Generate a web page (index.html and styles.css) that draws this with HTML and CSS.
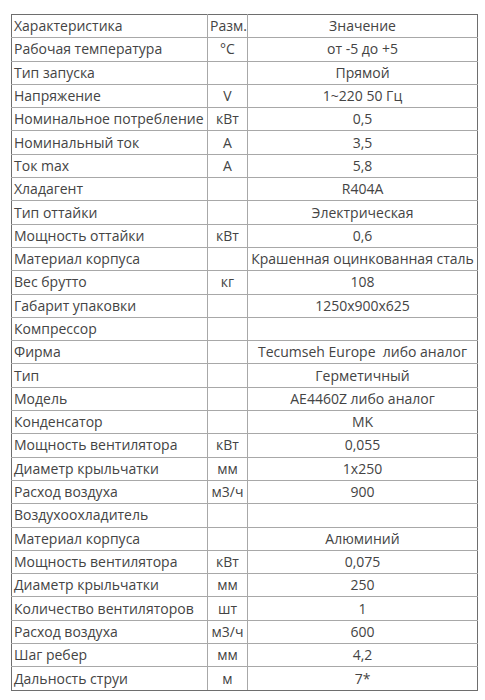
FILE: index.html
```html
<!DOCTYPE html>
<html lang="ru">
<head>
<meta charset="utf-8">
<link rel="stylesheet" href="styles.css">
</head>
<body>
<table class="spec">
<colgroup><col class="c1"><col class="c2"><col class="c3"></colgroup>
<tr><td>Характеристика</td><td class="u">Разм.</td><td class="v">Значение</td></tr>
<tr><td>Рабочая температура</td><td class="u">°C</td><td class="v">от -5 до +5</td></tr>
<tr><td>Тип запуска</td><td class="u"></td><td class="v">Прямой</td></tr>
<tr><td>Напряжение</td><td class="u">V</td><td class="v">1~220 50 Гц</td></tr>
<tr><td>Номинальное потребление</td><td class="u">кВт</td><td class="v">0,5</td></tr>
<tr><td>Номинальный ток</td><td class="u">А</td><td class="v">3,5</td></tr>
<tr><td>Ток max</td><td class="u">А</td><td class="v">5,8</td></tr>
<tr><td>Хладагент</td><td class="u"></td><td class="v">R404A</td></tr>
<tr><td>Тип оттайки</td><td class="u"></td><td class="v">Электрическая</td></tr>
<tr><td>Мощность оттайки</td><td class="u">кВт</td><td class="v">0,6</td></tr>
<tr><td>Материал корпуса</td><td class="u"></td><td class="v">Крашенная оцинкованная сталь</td></tr>
<tr><td>Вес брутто</td><td class="u">кг</td><td class="v">108</td></tr>
<tr><td>Габарит упаковки</td><td class="u"></td><td class="v">1250x900x625</td></tr>
<tr><td>Компрессор</td><td class="u"></td><td class="v"></td></tr>
<tr><td>Фирма</td><td class="u"></td><td class="v">Tecumseh Europe&nbsp; либо аналог</td></tr>
<tr><td>Тип</td><td class="u"></td><td class="v">Герметичный</td></tr>
<tr><td>Модель</td><td class="u"></td><td class="v">AE4460Z либо аналог</td></tr>
<tr><td>Конденсатор</td><td class="u"></td><td class="v">MK</td></tr>
<tr><td>Мощность вентилятора</td><td class="u">кВт</td><td class="v">0,055</td></tr>
<tr><td>Диаметр крыльчатки</td><td class="u">мм</td><td class="v">1x250</td></tr>
<tr><td>Расход воздуха</td><td class="u">м3/ч</td><td class="v">900</td></tr>
<tr><td>Воздухоохладитель</td><td class="u"></td><td class="v"></td></tr>
<tr><td>Материал корпуса</td><td class="u"></td><td class="v">Алюминий</td></tr>
<tr><td>Мощность вентилятора</td><td class="u">кВт</td><td class="v">0,075</td></tr>
<tr><td>Диаметр крыльчатки</td><td class="u">мм</td><td class="v">250</td></tr>
<tr><td>Количество вентиляторов</td><td class="u">шт</td><td class="v">1</td></tr>
<tr><td>Расход воздуха</td><td class="u">м3/ч</td><td class="v">600</td></tr>
<tr><td>Шаг ребер</td><td class="u">мм</td><td class="v">4,2</td></tr>
<tr><td>Дальность струи</td><td class="u">м</td><td class="v">7*</td></tr>
</table>
</body>
</html>
```
FILE: styles.css
```css
html, body {
  background: #fff;
}
body {
  margin: 0;
  padding: 14px 0 0 11px;
}
.spec {
  border-collapse: collapse;
  table-layout: fixed;
  width: 466px;
  height: 677px;
  border: 1px solid #6e6e6e;
  font-family: "Open Sans", "DejaVu Sans", sans-serif;
  font-size: 14px;
  color: #444;
}
.c1 { width: 196px; }
.c2 { width: 40px; }
.c3 { width: 230px; }
.spec td {
  border: 1px solid #a8a8a8;
  padding: 0 2px;
  white-space: nowrap;
  overflow: hidden;
  line-height: 18px;
  vertical-align: middle;
}
.spec td.u, .spec td.v {
  text-align: center;
}
.spec tr:first-child td { border-top-color: #6e6e6e; }
.spec tr:last-child td { border-bottom-color: #6e6e6e; }
.spec td:first-child { border-left-color: #6e6e6e; }
.spec td:last-child { border-right-color: #6e6e6e; }
```
